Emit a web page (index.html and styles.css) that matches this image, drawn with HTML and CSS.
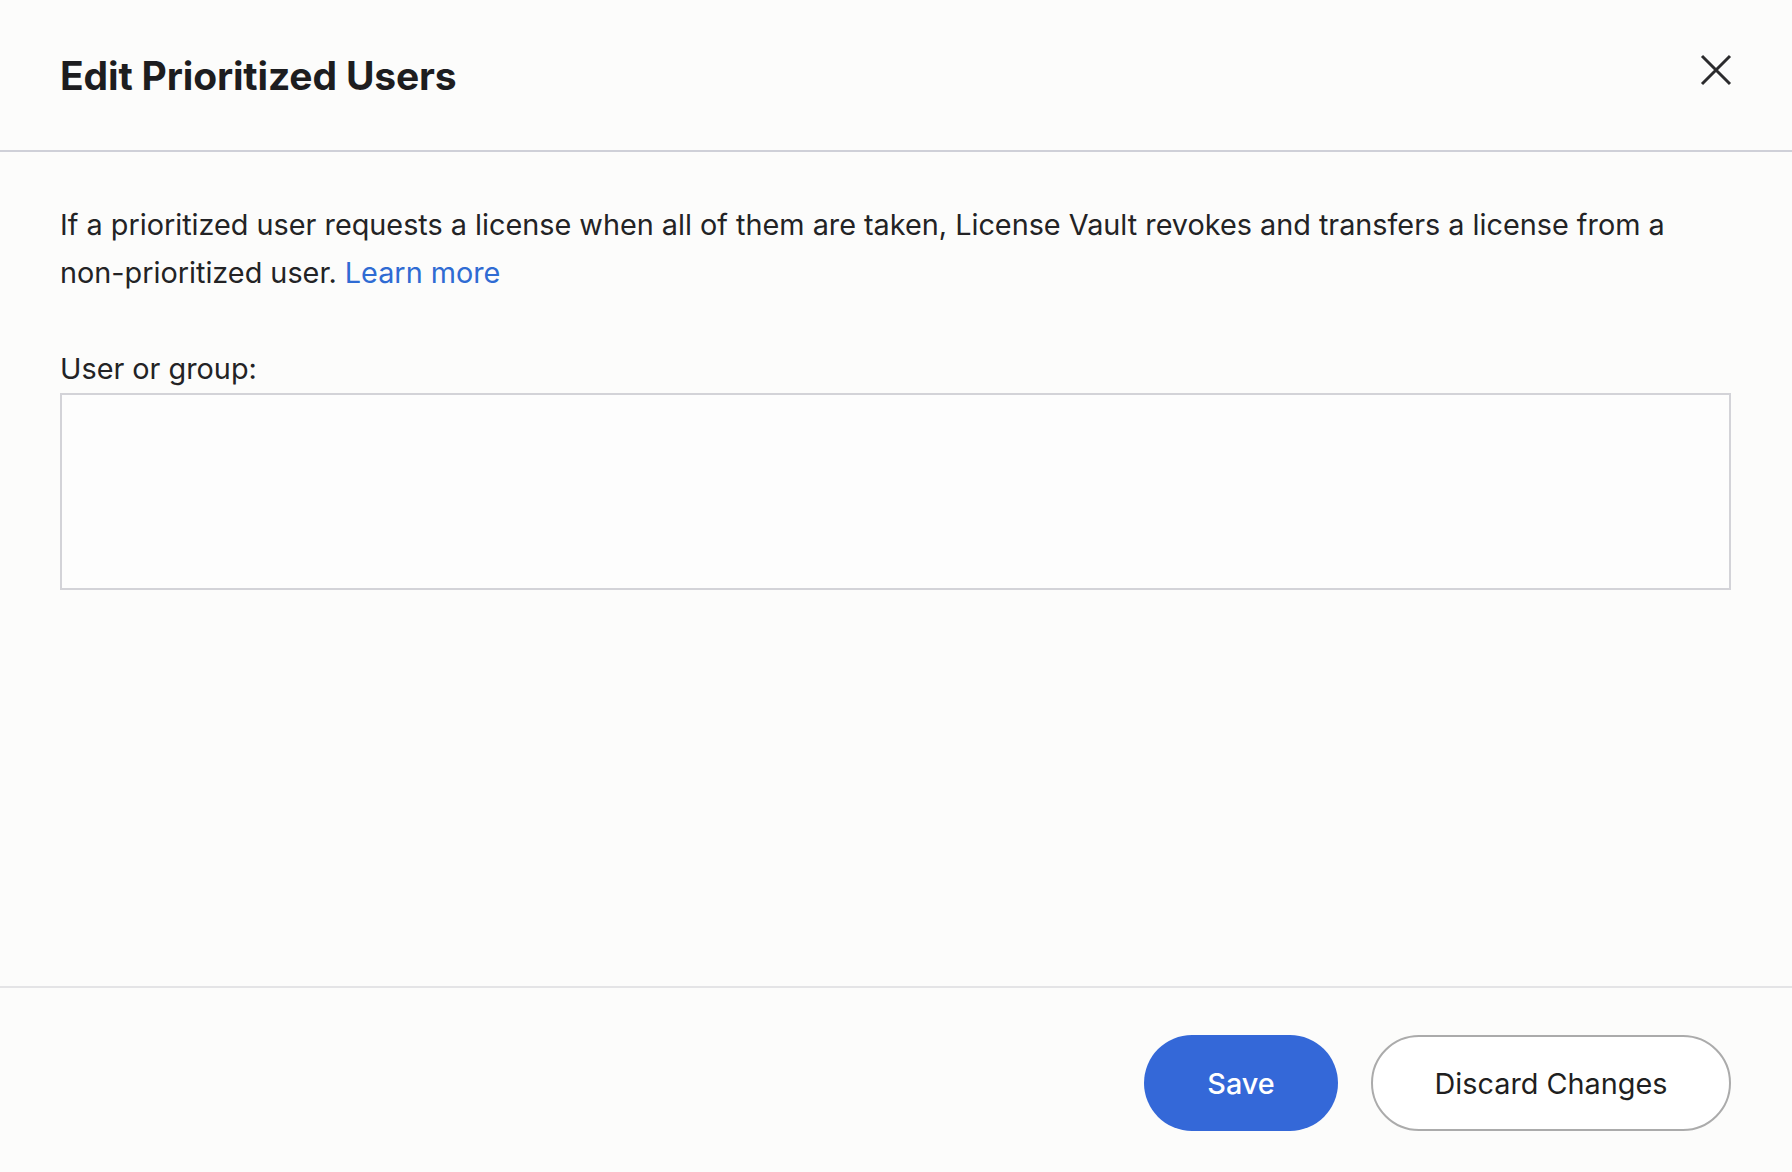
FILE: index.html
```html
<!DOCTYPE html>
<html lang="en">
<head>
<meta charset="utf-8">
<title>Edit Prioritized Users</title>
<link rel="stylesheet" href="styles.css">
</head>
<body>
<div class="dialog">
  <header class="dialog-header">
    <h1 class="dialog-title">Edit Prioritized Users</h1>
    <button class="close-btn" aria-label="Close">
      <svg width="32" height="32" viewBox="0 0 32 32" aria-hidden="true">
        <path d="M2 2 L30 30 M30 2 L2 30" stroke="#2b2b2d" stroke-width="3" fill="none"/>
      </svg>
    </button>
  </header>
  <main class="dialog-body">
    <p class="intro">If a prioritized user requests a license when all of them are taken, License Vault revokes and transfers a license from a non-prioritized user. <a class="link" href="#">Learn more</a></p>
    <label class="field-label" for="users">User or group:</label>
    <div class="field-box" id="users"></div>
  </main>
  <footer class="dialog-footer">
    <button class="btn btn-primary">Save</button>
    <button class="btn btn-secondary">Discard Changes</button>
  </footer>
</div>
</body>
</html>
```
FILE: styles.css
```css
* { box-sizing: border-box; }
html, body {
  margin: 0;
  height: 100%;
}
body {
  background: #fcfcfb;
  font-family: Inter, "Noto Sans", "Liberation Sans", sans-serif;
  color: #1f1f21;
}
.dialog {
  height: 100vh;
  display: flex;
  flex-direction: column;
}
.dialog-header {
  height: 152px;
  flex: none;
  padding: 0 61px 0 60px;
  display: flex;
  align-items: center;
  justify-content: space-between;
  border-bottom: 2px solid #cfd0d8;
}
.dialog-title {
  margin: 0;
  font-size: 39px;
  font-weight: 700;
  letter-spacing: -0.15px;
  color: #1d1d1f;
}
.close-btn {
  border: 0;
  background: none;
  padding: 0;
  width: 32px;
  height: 32px;
  margin-top: -10px;
  margin-right: -1px;
  cursor: pointer;
}
.close-btn svg { display: block; }
.dialog-body {
  flex: 1;
  padding: 49px 61px 0 60px;
}
.intro {
  margin: 0;
  font-size: 28.8px;
  line-height: 48px;
  color: #232325;
}
.link {
  color: #2f6bd3;
  text-decoration: none;
}
.field-label {
  display: block;
  margin-top: 54px;
  font-size: 28.8px;
  line-height: 36px;
  color: #232325;
}
.field-box {
  margin-top: 6px;
  height: 197px;
  border: 2px solid #d3d3d8;
  background: #fdfdfd;
}
.dialog-footer {
  flex: none;
  height: 186px;
  border-top: 2px solid #e4e4e6;
  padding: 47px 61px 0;
  display: flex;
  justify-content: flex-end;
  align-items: flex-start;
  gap: 33px;
}
.btn {
  height: 96px;
  border-radius: 48px;
  font-family: inherit;
  font-size: 28.8px;
  cursor: pointer;
}
.btn-primary {
  width: 194px;
  background: #3468d8;
  border: 0;
  color: #ffffff;
  font-weight: 500;
}
.btn-secondary {
  width: 360px;
  background: #ffffff;
  border: 2px solid #ababab;
  color: #1f1f21;
  font-weight: 400;
}
```
